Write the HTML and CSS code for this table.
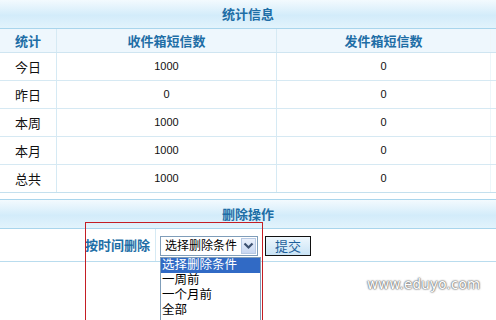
FILE: index.html
```html
<!DOCTYPE html>
<html>
<head>
<meta charset="utf-8">
<link rel="stylesheet" href="styles.css">
</head>
<body>
<div class="page">
  <section class="panel">
    <div class="panel-title">统计信息</div>
    <div class="grid head"><div>统计</div><div>收件箱短信数</div><div>发件箱短信数</div></div>
    <div class="grid row"><div class="lbl">今日</div><div>1000</div><div>0</div></div>
    <div class="grid row"><div class="lbl">昨日</div><div>0</div><div>0</div></div>
    <div class="grid row"><div class="lbl">本周</div><div>1000</div><div>0</div></div>
    <div class="grid row"><div class="lbl">本月</div><div>1000</div><div>0</div></div>
    <div class="grid row"><div class="lbl">总共</div><div>1000</div><div>0</div></div>
  </section>
  <section class="panel del">
    <div class="panel-title">删除操作</div>
    <div class="del-row">
      <div class="del-label">按时间删除</div>
      <div class="del-ctrl">
        <div class="select">
          <span class="select-text">选择删除条件</span>
          <span class="select-btn"><svg width="11" height="8" viewBox="0 0 11 8"><path d="M1.5 1.5 L5.5 5.5 L9.5 1.5" fill="none" stroke="#3d5170" stroke-width="2.2"/></svg></span>
        </div>
        <button class="submit">提交</button>
      </div>
    </div>
  </section>
  <ul class="dropdown">
    <li class="sel">选择删除条件</li>
    <li>一周前</li>
    <li>一个月前</li>
    <li>全部</li>
  </ul>
  <div class="redbox"></div>
  <div class="watermark">www.eduyo.com</div>
</div>
</body>
</html>
```

FILE: styles.css
```css
html, body { margin: 0; padding: 0; background: #fff; }
body { font-family: "Noto Sans CJK SC", "Liberation Sans", sans-serif; font-size: 12px; color: #222; }
.page { position: relative; width: 496px; height: 320px; overflow: hidden; }
.panel { width: 496px; }
.panel-title {
  height: 29px; box-sizing: border-box;
  border-bottom: 1px solid #a9d5ec;
  background: linear-gradient(#f3fafe, #d3ecfa 55%, #e2f3fc);
  text-align: center; font-weight: bold; font-size: 13px; color: #1e6ea6;
  line-height: 28px;
}
.grid { display: grid; grid-template-columns: 57px 220px 1fr; }
.grid > div { border-right: 1px solid #d6eaf4; text-align: center; box-sizing: border-box; }
.grid > div:last-child { border-right: 1px solid #eef6fa; margin-right: 5px; }
.head { height: 24px; background: #eef7fd; border-bottom: 1px solid #cfe5f1; box-sizing: border-box; }
.head > div { font-weight: bold; font-size: 13px; color: #1e6ea6; line-height: 23px; }
.row { height: 28px; border-bottom: 1px solid #d6e9f3; box-sizing: border-box; }
.row > div { line-height: 27px; font-family: "Liberation Sans", sans-serif; font-size: 11px; color: #111; }
.row > div.lbl { font-family: "Noto Sans CJK SC", sans-serif; font-size: 13px; }
.row:last-child { border-bottom: 1px solid #c4e0ee; }

.del { margin-top: 6px; border-top: 1px solid #a9d5ec; }
.del .panel-title { height: 29px; line-height: 28px; }
.del-row { display: flex; height: 33px; border-bottom: 1px solid #b9dcee; box-sizing: border-box; }
.del-label {
  width: 156px; box-sizing: border-box; border-right: 1px solid #d6eaf4;
  text-align: right; padding-right: 5px; line-height: 32px;
  font-weight: bold; font-size: 13px; color: #1e6ea6;
}
.del-ctrl { display: flex; align-items: center; padding-left: 4px; gap: 7px; }
.select {
  width: 98px; height: 20px; box-sizing: border-box; border: 1px solid #7f9db9;
  display: flex; align-items: center; justify-content: space-between; background: #fff;
  margin-top: 1px;
}
.select-text { font-family: "Liberation Sans", "Noto Sans CJK SC", sans-serif; font-size: 12px; padding-left: 4px; color: #000; line-height: 18px; }
.select-btn {
  width: 15px; height: 16px; margin-right: 1px; box-sizing: border-box;
  border: 1px solid #b7c9e3; background: linear-gradient(#eaf0fb, #c8d7f1);
  display: flex; align-items: center; justify-content: center;
}
.submit {
  width: 46px; height: 20px; margin-top: 1px; padding: 0;
  border: 1px solid #111; background: linear-gradient(#eef7fd, #c9e3f5);
  font-family: "Noto Sans CJK SC", sans-serif; font-size: 13px; color: #1e5f9a; line-height: 18px;
}
.dropdown {
  position: absolute; left: 160px; top: 257px; width: 101px; margin: 0; padding: 0;
  list-style: none; border: 1px solid #7f9db9; box-sizing: border-box; background: #fff;
  height: 70px;
}
.dropdown li {
  height: 15px; line-height: 15px; font-size: 12.5px; padding-left: 1px; color: #000;
  font-family: "Liberation Sans", "Noto Sans CJK SC", sans-serif;
}
.dropdown li.sel { background: #316ac5; color: #fff; }
.redbox {
  position: absolute; left: 85px; top: 222px; width: 178px; height: 110px;
  border: 1px solid #c41e24; box-sizing: border-box;
}
.watermark {
  position: absolute; left: 367px; top: 276px;
  font-family: "DejaVu Sans", sans-serif; font-size: 13.5px; color: #fff; letter-spacing: 0.2px;
  text-shadow: 0 0 2px #777, 0 0 2px #777, 0 0 1px #555;
}
```
